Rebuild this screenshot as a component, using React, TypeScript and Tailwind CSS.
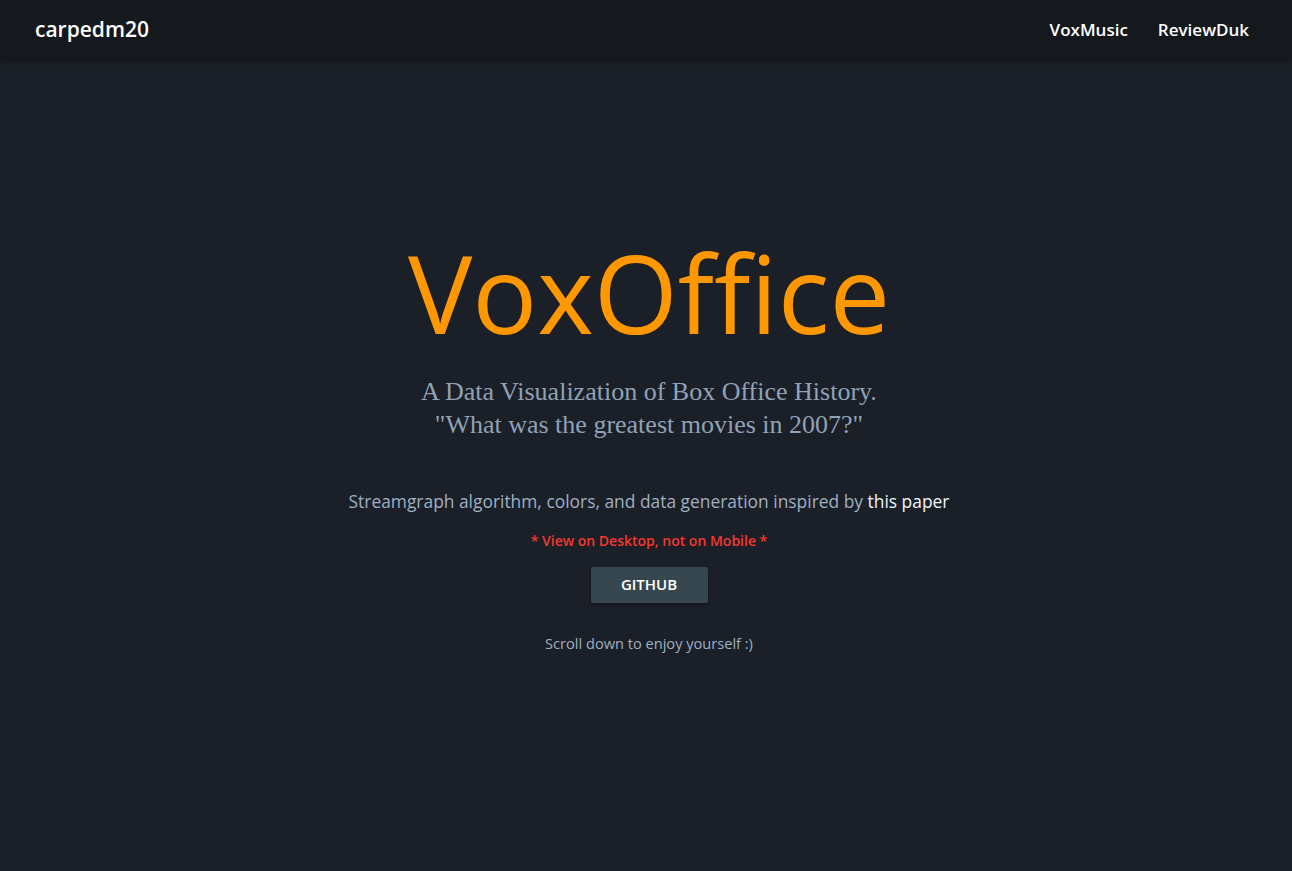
import React from "react";

export default function App() {
  const sans = { fontFamily: '"Open Sans", "Noto Sans", sans-serif' };
  return (
    <div className="min-h-[871px] w-full bg-[#1b1f27]" style={sans}>
      <nav className="flex h-[60px] items-center justify-between bg-[#15181d] pl-[35px] pr-[43px] shadow-[0_2px_4px_rgba(0,0,0,0.25)]">
        <a className="text-[21px] font-semibold text-white">carpedm20</a>
        <div className="flex items-center gap-[30px] text-[17px] font-semibold text-white">
          <a>VoxMusic</a>
          <a>ReviewDuk</a>
        </div>
      </nav>
      <main className="flex flex-col items-center pl-[6px] pt-[168px] text-center">
        <h1 className="text-[108px] leading-[1.2] font-normal text-[#ff9800]">VoxOffice</h1>
        <div
          className="mt-[17px] text-[26px] leading-[33px] text-[#8fa2b6]"
          style={{ fontFamily: '"Liberation Serif", "DejaVu Serif", serif' }}
        >
          <p>A Data Visualization of Box Office History.</p>
          <p>"What was the greatest movies in 2007?"</p>
        </div>
        <p className="mt-[47px] text-[17.4px] text-[#9eb0c2]">
          Streamgraph algorithm, colors, and data generation inspired by{" "}
          <a className="font-medium text-[#eef6ff]">this paper</a>
        </p>
        <p className="mt-[16px] text-[14px] font-semibold text-[#f4372f]">* View on Desktop, not on Mobile *</p>
        <button className="mt-[16px] h-[36px] w-[117px] rounded-[2px] bg-[#37474f] text-[15px] font-semibold text-white shadow-[0_2px_3px_rgba(0,0,0,0.3)]">
          GITHUB
        </button>
        <p className="mt-[30px] text-[14.6px] text-[#9eb0c2]">Scroll down to enjoy yourself :)</p>
      </main>
    </div>
  );
}
